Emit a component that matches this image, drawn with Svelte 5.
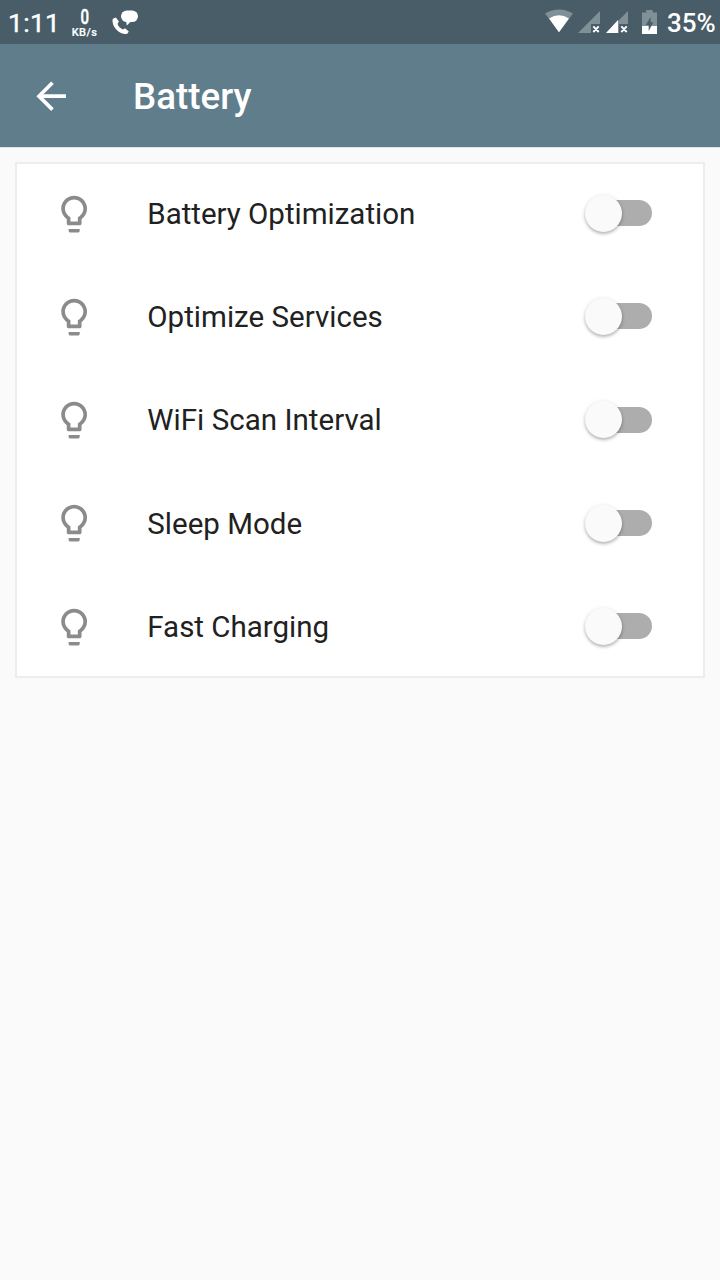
<script>
  const items = $state([
    { label: 'Battery Optimization', width: 268, on: false },
    { label: 'Optimize Services', width: 235.5, on: false },
    { label: 'WiFi Scan Interval', width: 234.5, on: false },
    { label: 'Sleep Mode', width: 154.8, on: false },
    { label: 'Fast Charging', width: 181.8, on: false }
  ]);
</script>

<div class="screen">
  <div class="status">
    <svg class="clock" width="64" height="44"><text x="8" y="32.300" textLength="52">1:11</text></svg>
    <div class="speed"><span class="rate">0</span><span class="unit">KB/s</span></div>
    <svg class="call" width="28" height="26" viewBox="0 0 28 26" fill="#fff">
      <path d="M.8 8.700 3.900 7.600 6.900 11.500 5.500 14C6.700 16.800 8.500 18.500 11 19.500L13 18.300 16.800 21.500 15 23.900C8 25.100-1.200 16.800.8 8.700Z" />
      <rect x="9" y=".5" width="17" height="11.600" rx="5.800" />
      <path d="M14 10.500h6L14.800 15.500Z" />
    </svg>
    <svg class="signals" width="120" height="28" viewBox="0 0 120 28">
      <path d="M5 5.500Q19-2.700 33 5.500L19 24.200Z" fill="#7f9097" />
      <path d="M9.100 10.500Q19 4.200 28.900 10.500L19 24.200Z" fill="#fff" />
      <path d="M60 3V16h-9v9H38Z" fill="#7f9097" />
      <path d="M88 3V16h-9v9H66Z" fill="#7f9097" />
      <path d="M66 25 78 12V25Z" fill="#fff" />
      <path d="M53.300 18.400l5.400 5.600M58.700 18.400l-5.400 5.600M81.300 18.400l5.400 5.600M86.700 18.400l-5.400 5.600" stroke="#fff" stroke-width="1.9" />
      <path d="M106.300 2h6.400v2.400H117V26h-15V4.400h4.300Z" fill="#7f9097" />
      <path d="M102 18h15v8h-15Z" fill="#fff" />
      <path d="M110.600 9v5.200h2.700L108.700 23v-6h-2.900Z" fill="#485d67" />
    </svg>
    <span class="percent">35%</span>
  </div>

  <header>
    <svg class="back" width="44.3" height="44.3" viewBox="0 0 24 24" fill="#fff"><path d="M20 11H7.830l5.590-5.590L12 4l-8 8 8 8 1.410-1.410L7.830 13H20v-2z" /></svg>
    <svg class="title" width="130" height="50"><text x="0" y="37.700" textLength="118.5" lengthAdjust="spacingAndGlyphs">Battery</text></svg>
  </header>

  <main>
    {#each items as item}
      <div class="row">
        <svg width="44.3" height="44.3" viewBox="0 0 24 24" fill="#8b8b8b"><path d="M9 21c0 .55.45 1 1 1h4c.55 0 1-.45 1-1v-1H9v1zm3-19C8.140 2 5 5.140 5 9c0 2.380 1.190 4.470 3 5.740V17c0 .55.45 1 1 1h6c.55 0 1-.45 1-1v-2.260c1.810-1.270 3-3.360 3-5.740 0-3.860-3.140-7-7-7zm2.850 11.100l-.85.6V16h-4v-2.300l-.85-.6C7.800 12.160 7 10.630 7 9c0-2.760 2.240-5 5-5s5 2.240 5 5c0 1.630-.8 3.160-2.150 4.100z" /></svg>
        <svg class="label" width="400" height="50"><text x="1.3" y="34.800" textLength={item.width}>{item.label}</text></svg>
        <button class="switch" class:on={item.on} aria-label={item.label} onclick={() => (item.on = !item.on)}><span class="thumb"></span></button>
      </div>
    {/each}
  </main>
</div>

<style>
  :global(body) { background: #fafafa; }
  .screen { width: 720px; height: 1280px; background: #fafafa; font-family: Roboto, sans-serif; overflow: hidden; }
  svg { display: block; flex: none; }
  .status { height: 44px; background: #485d67; display: flex; align-items: flex-start; color: #fff; }
  .clock { fill: #fff; font-size: 26.5px; stroke: #fff; stroke-width: .4px; }
  .speed { width: 41px; height: 44px; display: flex; flex-direction: column; align-items: center; font-weight: 500; }
  .rate { font-size: 20px; line-height: 20px; margin-top: 7px; transform: scaleX(.75); -webkit-text-stroke: .5px #fff; }
  .unit { font-size: 11px; line-height: 11px; letter-spacing: .45px; font-weight: 500; -webkit-text-stroke: .2px #fff; }
  .call { margin: 10px 0 0 7px; }
  .signals { margin: 8px 0 0 400px; }
  .percent { margin-left: 7px; font-size: 26px; line-height: 46px; font-weight: 500; }
  header { height: 103px; box-sizing: border-box; background: #607d8b; box-shadow: 0 1px #dfe4e7; display: flex; align-items: center; padding: 1px 0 0 29px; }
  .title { margin-left: 59.500px; fill: #fff; font-size: 36.9px; font-weight: 500; }
  main { margin: 15px; height: 516px; box-sizing: border-box; box-shadow: inset 0 0 0 2px #ededed; background: #fff; }
  .row { height: 103.300px; display: flex; align-items: center; padding: 0 53px 0 37px; }
  .label { margin-left: 50px; fill: #212121; font-size: 29.5px; }
  .switch { display: flex; align-items: center; width: 61px; height: 26px; margin: 0 0 1px auto; padding: 0; border: 0; border-radius: 13px; background: #adadad; }
  .thumb { flex: none; width: 37px; height: 37px; margin-left: -6px; border-radius: 50%; background: #fafafa; box-shadow: 0 2px 3px rgba(0,0,0,.22), 0 1px 5px rgba(0,0,0,.12); }
  .on { background: #90a4ae; }
  .on .thumb { margin-left: 31px; background: #607d8b; }
</style>
